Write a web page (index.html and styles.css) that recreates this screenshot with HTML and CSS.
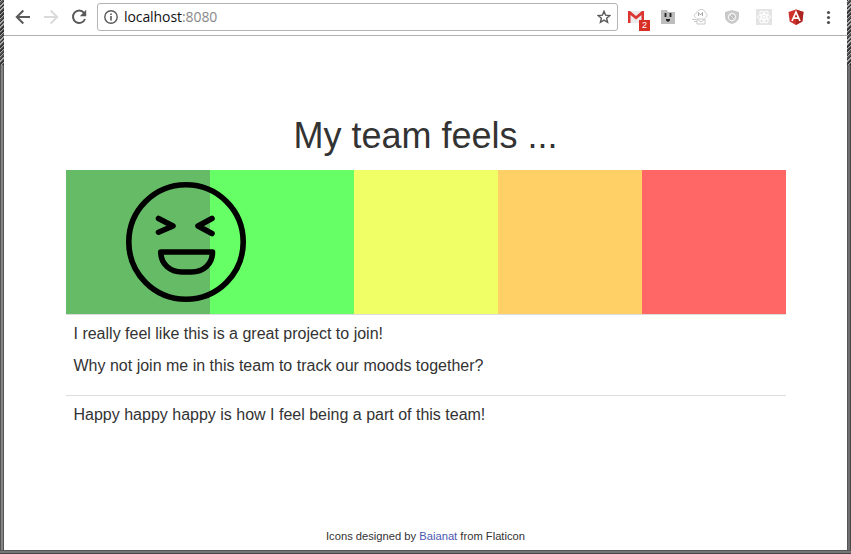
FILE: index.html
```html
<!DOCTYPE html>
<html lang="en">
<head>
<meta charset="utf-8">
<title>My team feels ...</title>
<link rel="stylesheet" href="styles.css">
</head>
<body>
<div class="window">
  <div class="edge edge-left"></div>
  <div class="view">
    <header class="toolbar">
      <svg class="nav" viewBox="0 0 16 16"><path d="M15 8H2M8.300 1.500 1.800 8l6.500 6.500" fill="none" stroke="#5a5a5a" stroke-width="2"/></svg>
      <svg class="nav" viewBox="0 0 16 16"><path d="M1 8h13M7.700 1.500 14.200 8l-6.500 6.500" fill="none" stroke="#dadada" stroke-width="2"/></svg>
      <svg class="nav" viewBox="0 0 16 16"><path d="M13 3.800A6.200 6.200 0 1 0 14 10" fill="none" stroke="#5a5a5a" stroke-width="2"/><path d="M15.200.8v6.400H8.800z" fill="#5a5a5a"/></svg>
      <div class="address">
        <svg class="info" viewBox="0 0 14 14"><circle cx="7" cy="7" r="6.2" fill="none" stroke="#5a5a5a" stroke-width="1.4"/><path d="M7 6v4.5M7 3.4v1.5" stroke="#5a5a5a" stroke-width="1.6"/></svg>
        <span class="url">localhost<span class="port">:8080</span></span>
        <svg class="star" viewBox="0 0 14 14"><path d="m7 1.300 1.600 3.900 4.200.3-3.200 2.700 1 4.100L7 10.100l-3.600 2.200 1-4.100L1.200 5.500l4.200-.3z" fill="none" stroke="#5a5a5a" stroke-width="1.4"/></svg>
      </div>
      <div class="extensions">
        <div class="mail">
          <svg class="ext" viewBox="0 0 16 16"><path d="M0 2h16v12H0z" fill="#eceaea"/><path d="M0 2h2l6 5 6-5h2v12h-2.500V6L8 10.500 2.500 6v8H0z" fill="#dc3430"/></svg>
          <span class="badge">2</span>
        </div>
        <svg class="ext" viewBox="0 0 16 16"><path d="M1 1h6l1 2h7v12H1z" fill="#bdbdbd"/><path d="M5.500 4v4M10.500 4v4" stroke="#222" stroke-width="1.800"/><path d="M6 10h4v1.500L8 13l-2-1.500z" fill="#222"/></svg>
        <svg class="ext" viewBox="0 0 16 16"><g fill="none" stroke="#c8c8c8"><path d="M4.500 9C1.500 8 2 5 4.500 4 6-.5 12-.5 13 3c3 2 2.500 5 0 6M5 10v5h8v-5M5 10l4 3 4-3zM0 10.500h4M2 12.500h3"/><path d="M6.500 7V3.500l2 2.500 2-2.500V7" stroke="#aaa"/></g></svg>
        <svg class="ext" viewBox="0 0 16 16"><path d="m8 1 7 2v5c0 3-3 6-7 7-4-1-7-4-7-7V3z" fill="#c9c9c9"/><circle cx="8" cy="8" r="3.500" fill="#bbb" stroke="#f3f3f3" stroke-width="1.300"/><path d="m6 6 4 4" stroke="#eee"/></svg>
        <svg class="ext" viewBox="0 0 16 16"><path d="M0 0h16v16H0z" fill="#e4e4e4"/><g fill="none" stroke="#fff"><ellipse cx="8" cy="8" rx="6.500" ry="2.500"/><ellipse cx="8" cy="8" rx="6.500" ry="2.500" transform="rotate(60 8 8)"/><ellipse cx="8" cy="8" rx="6.500" ry="2.500" transform="rotate(120 8 8)"/></g><circle cx="8" cy="8" r="1.300" fill="#fff"/></svg>
        <svg class="ext" viewBox="0 0 16 16"><path d="m8 .5 7.500 2.500-1.200 9.500L8 16l-6.300-3.500L.5 3z" fill="#cf302b"/><path d="m8 .5 7.500 2.500-1.200 9.500L8 16z" fill="#ad2522"/><path d="M4 12 8 3l4 9M5.500 9.200h5" fill="none" stroke="#fff" stroke-width="1.700"/></svg>
        <svg class="ext" viewBox="0 0 16 16"><g fill="#505050"><circle cx="8.500" cy="3.500" r="1.600"/><circle cx="8.500" cy="8.500" r="1.600"/><circle cx="8.500" cy="13.500" r="1.600"/></g></svg>
      </div>
    </header>
    <main class="page">
      <h1>My team feels ...</h1>
      <div class="moods">
        <div class="mood great"></div>
        <div class="mood good"></div>
        <div class="mood okay"></div>
        <div class="mood low"></div>
        <div class="mood bad"></div>
        <svg class="face" viewBox="0 0 120 120"><g fill="none" stroke="#000" stroke-width="5.600" stroke-linecap="round" stroke-linejoin="round"><circle cx="60" cy="60" r="57.200"/><path d="M32.500 36.500 47 44 32.500 50.200M86 36.500 72 44l14 7.500M34.800 70H86.500c0 12-9 20-21 20H56c-12 0-21.200-8-21.200-20z"/></g></svg>
      </div>
      <section class="comment first">
        <p>I really feel like this is a great project to join!</p>
        <p>Why not join me in this team to track our moods together?</p>
      </section>
      <section class="comment">
        <p>Happy happy happy is how I feel being a part of this team!</p>
      </section>
      <footer>Icons designed by <span class="link">Baianat</span> from Flaticon</footer>
    </main>
  </div>
  <div class="edge edge-right"></div>
  <div class="edge-bottom"></div>
</div>
</body>
</html>
```
FILE: styles.css
```css
* { box-sizing: border-box; }
body { margin: 0; background: #fff; color: #333; font-family: "Liberation Sans", Arial, sans-serif; }
.window { display: grid; grid-template: 550px 4px / 4px 843px 4px; width: 851px; height: 554px; overflow: hidden; }
.edge { background: linear-gradient(90deg, #555 1px, #858585 1px 3px, #555 3px); }
.edge-right { background: linear-gradient(90deg, #555 1px, #707070 1px 3px, #4a4648 3px); }
.edge::before { content: ""; display: block; height: 65px; background: repeating-linear-gradient(135deg, #333 0 1px, #aaa 1px 2px, #555 2px 3px); }
.edge-bottom { grid-column: 1 / -1; background: linear-gradient(#555 1px, #777 1px 3px, #4a4648 3px); }
.view { display: flex; flex-direction: column; }
.toolbar { height: 36px; display: flex; align-items: flex-start; border-bottom: 1px solid #b0b0b0; padding: 3px 10px 0 11px; }
.nav { width: 16px; height: 16px; margin: 6px 12px 0 0; }
.address { width: 521px; height: 28px; margin-left: -2px; border: 1px solid #b4b4b4; border-radius: 3px; display: flex; align-items: center; padding: 0 6px; }
.info { width: 14px; height: 14px; margin-right: 6px; }
.url { font: 14px/20px "Open Sans", "Noto Sans", sans-serif; letter-spacing: -0.08px; color: #111; }
.port { color: #888; }
.star { width: 14px; height: 14px; margin-left: auto; }
.extensions { display: flex; gap: 16px; margin: 6px 0 0 10px; }
.ext { width: 16px; height: 16px; display: block; }
.mail { position: relative; }
.badge { position: absolute; left: 11px; top: 11px; width: 11px; height: 11px; background: #d93025; color: #fff; font-size: 9px; line-height: 11px; text-align: center; }
.page { flex: 1; padding: 78px 61px 0 62px; display: flex; flex-direction: column; }
h1 { margin: 0 1px 0 0; height: 56px; font-size: 36px; font-weight: 400; line-height: 43px; text-align: center; }
.moods { position: relative; display: grid; grid-template-columns: repeat(5, 144px); height: 144px; }
.great { background: #66bc66; }
.good { background: #66ff66; }
.okay { background: #f0ff66; }
.low { background: #ffd066; }
.bad { background: #ff6666; }
.face { position: absolute; left: 60px; top: 12px; width: 120px; height: 120px; }
.comment { border-top: 1px solid #ddd; padding: 8px 8px 8px 7.5px; font-size: 16px; line-height: 22px; }
.first { height: 81px; }
p { margin: 0 0 10px; }
footer { margin: auto 1px 0 0; height: 21px; font-size: 11.2px; line-height: 14px; text-align: center; }
.link { color: #4a57b0; }
```
